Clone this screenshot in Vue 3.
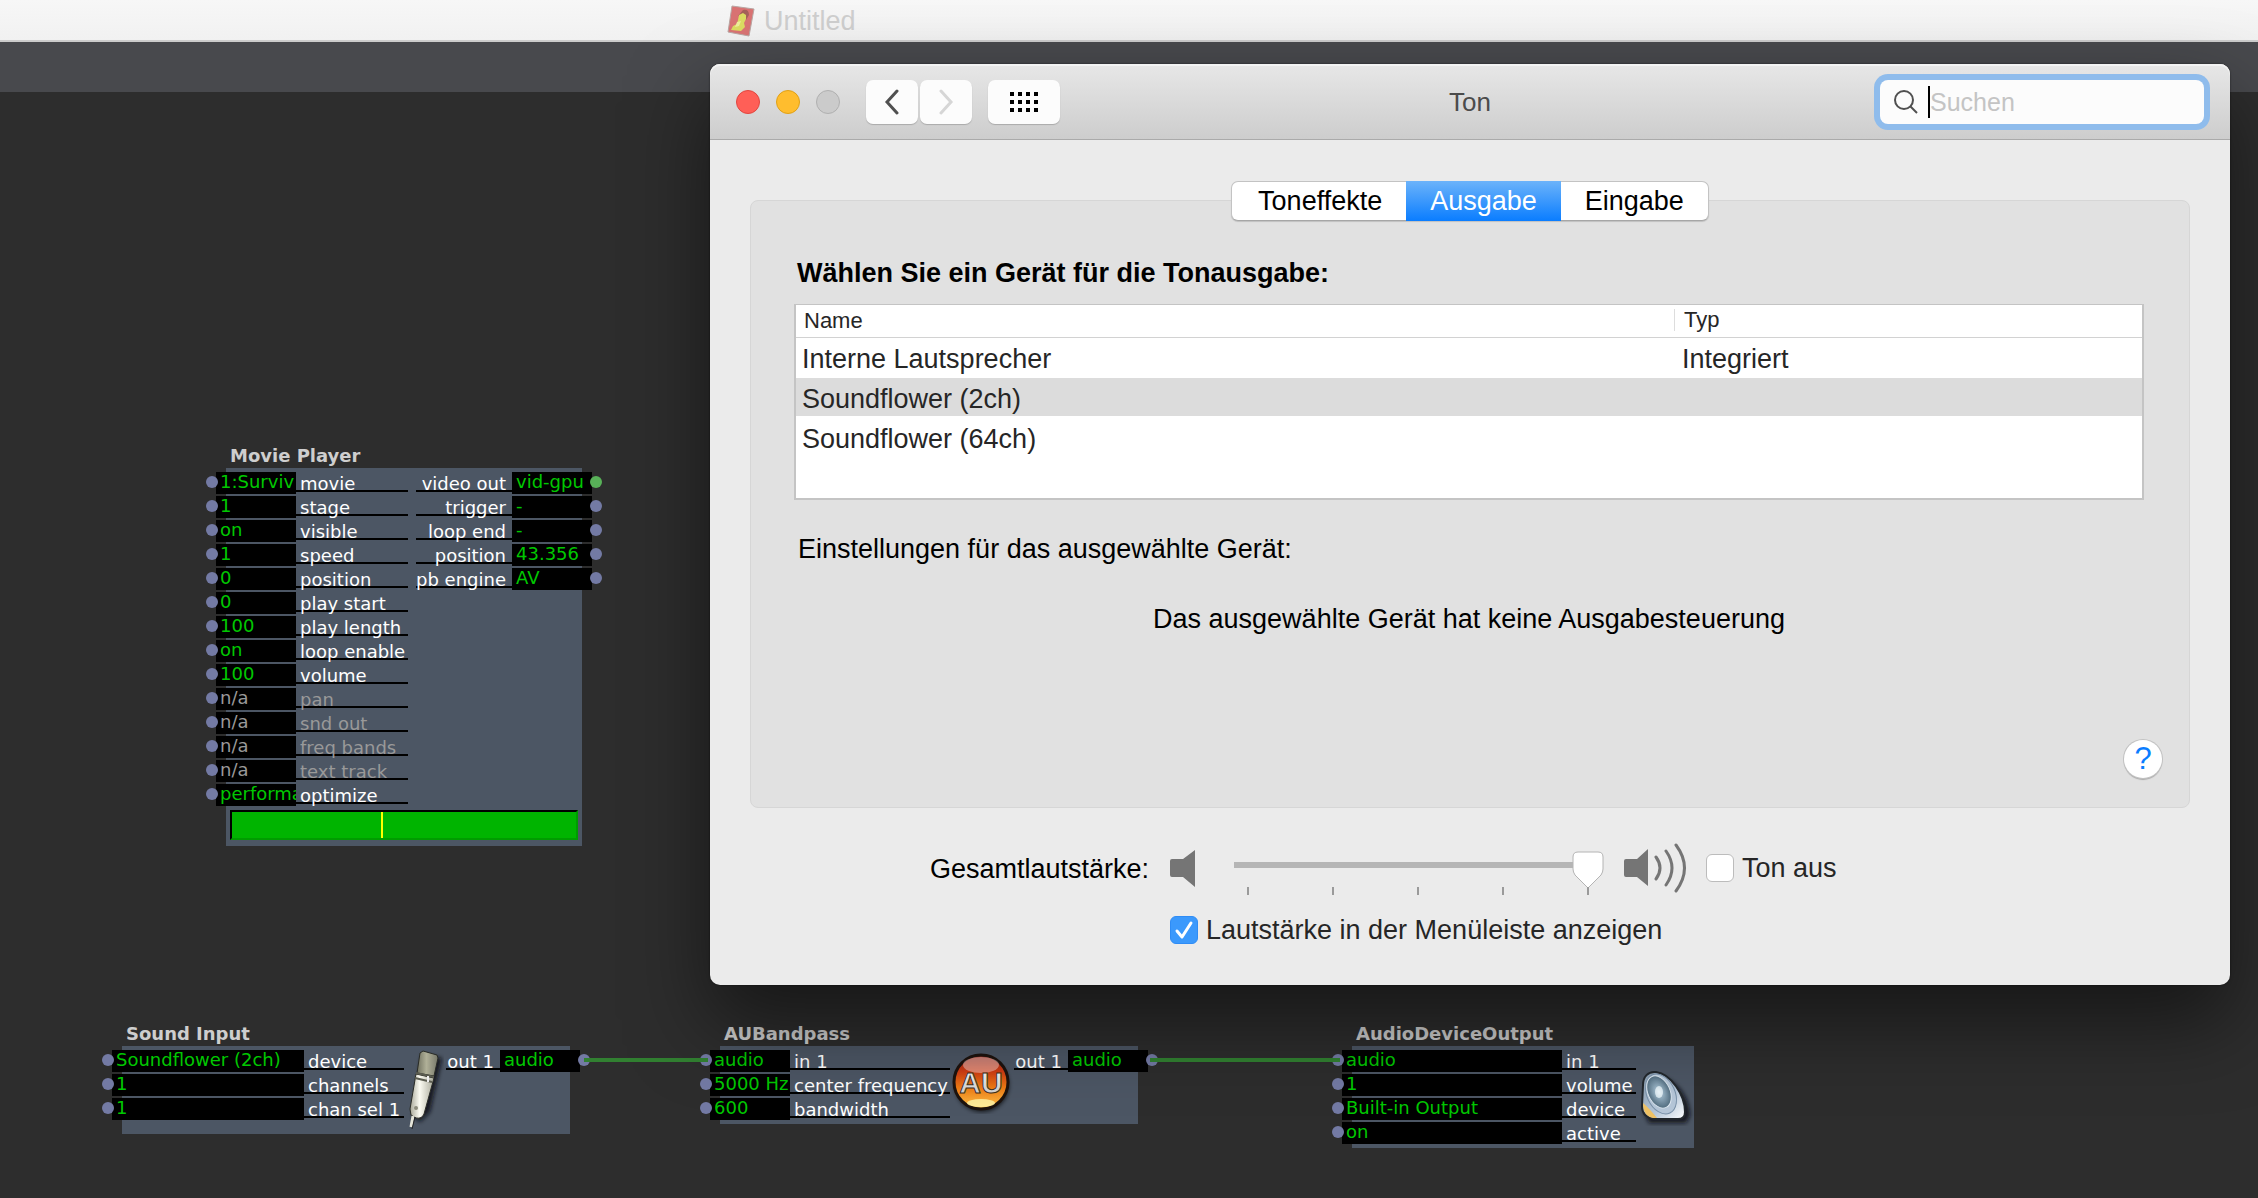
<script setup>
import { ref } from 'vue'

const inp = (value, label, off = false) => ({ value, label, off })

const nodes = [
  {
    id: 'movie', title: 'Movie Player', x: 226, y: 352, width: 356, valueWidth: 80, labelWidth: 112, outWidth: 96,
    inputs: [
      inp('1:Surviv', 'movie'), inp('1', 'stage'), inp('on', 'visible'), inp('1', 'speed'),
      inp('0', 'position'), inp('0', 'play start'), inp('100', 'play length'), inp('on', 'loop enable'),
      inp('100', 'volume'), inp('n/a', 'pan', true), inp('n/a', 'snd out', true),
      inp('n/a', 'freq bands', true), inp('n/a', 'text track', true), inp('performa', 'optimize')
    ],
    outputs: [
      { label: 'video out', value: 'vid-gpu', live: true }, { label: 'trigger', value: '-' },
      { label: 'loop end', value: '-' }, { label: 'position', value: '43.356' }, { label: 'pb engine', value: 'AV' }
    ],
    progress: 43.356
  },
  {
    id: 'mic', title: 'Sound Input', x: 122, y: 930, width: 448, valueWidth: 192, labelWidth: 100, outWidth: 54,
    inputs: [inp('Soundflower (2ch)', 'device'), inp('1', 'channels'), inp('1', 'chan sel 1')],
    outputs: [{ label: 'out 1', value: 'audio' }]
  },
  {
    id: 'au', title: 'AUBandpass', x: 720, y: 930, width: 418, valueWidth: 80, labelWidth: 160, outWidth: 54,
    inputs: [inp('audio', 'in 1'), inp('5000 Hz', 'center frequency'), inp('600', 'bandwidth')],
    outputs: [{ label: 'out 1', value: 'audio' }]
  },
  {
    id: 'speaker', title: 'AudioDeviceOutput', x: 1352, y: 930, width: 342, valueWidth: 220, labelWidth: 74, outWidth: 0,
    inputs: [inp('audio', 'in 1'), inp('1', 'volume'), inp('Built-in Output', 'device'), inp('on', 'active')],
    outputs: []
  }
]

const wires = [
  { x: 584, y: 966, width: 124 },
  { x: 1150, y: 966, width: 190 }
]

const tabs = ['Toneffekte', 'Ausgabe', 'Eingabe']
const activeTab = ref('Ausgabe')

const devices = [
  { name: 'Interne Lautsprecher', type: 'Integriert' },
  { name: 'Soundflower (2ch)', type: '' },
  { name: 'Soundflower (64ch)', type: '' }
]
const selected = ref('Soundflower (2ch)')
const volume = ref(100)
const muted = ref(false)
const inMenuBar = ref(true)
const query = ref('')
</script>

<template>
  <div class="desktop">
    <header class="doc-bar">
      <svg class="doc-icon" width="28" height="32" viewBox="0 0 28 32" aria-hidden="true">
        <path d="M5 1 27 4 22 31 1 27Z" fill="#d97373" stroke="#b9a7a4" stroke-width="1" />
        <path d="M16 5q6-1 6 5l-3 5-3-5-5 1Z" fill="#a5615a" />
        <path d="m12 10 4-2 3 2v4l-2 4 1 4-4 4-10-1 2-4 4-2 1-4Z" fill="#dcdc62" />
        <path d="m10 17 4-1-2 5-4 1Z" fill="#eeee9a" />
      </svg>
      <span>Untitled</span>
    </header>
    <div class="doc-band"></div>

    <main class="canvas">
      <section v-for="n in nodes" :key="n.id" class="node" :style="{ left: n.x + 'px', top: n.y + 'px', width: n.width + 'px' }">
        <h2 class="node-title">{{ n.title }}</h2>
        <div class="node-body">
          <div class="node-ports">
            <div class="ports inputs">
              <div v-for="(p, i) in n.inputs" :key="i" class="port" :class="{ off: p.off }">
                <i class="dot"></i>
                <span class="value" :style="{ width: n.valueWidth + 'px' }">{{ p.value }}</span>
                <span class="label" :style="{ width: n.labelWidth + 'px' }">{{ p.label }}</span>
              </div>
            </div>

            <svg v-if="n.id === 'mic'" class="node-icon" width="36" height="80" viewBox="0 0 36 80" aria-hidden="true">
              <defs>
                <linearGradient id="micHead" x1="0" x2="1"><stop offset="0" stop-color="#6f705f" /><stop offset=".45" stop-color="#b0b098" /><stop offset="1" stop-color="#77786a" /></linearGradient>
                <linearGradient id="micBody" x1="0" x2="1"><stop offset="0" stop-color="#a7a798" /><stop offset=".4" stop-color="#fbfbf2" /><stop offset="1" stop-color="#a9a99a" /></linearGradient>
                <filter id="micBlur" x="-50%" y="-20%" width="200%" height="140%"><feGaussianBlur stdDeviation="2" /></filter>
              </defs>
              <path d="M14 5 34 8 22 62 12 72 5 66Z" fill="#0c0f13" opacity=".85" filter="url(#micBlur)" />
              <path d="m12 3 3-2 14 4 1 3-4 18-17-3Z" fill="url(#micHead)" stroke="#292b26" stroke-width="1" />
              <path d="m8 24 18 4-10 36q-2 5-8 4l-5-3-1-6Z" fill="url(#micBody)" stroke="#2b2d28" stroke-width="1" />
              <path d="m8 23 18 4M7 28l17 4" stroke="#5b5c50" stroke-width="2" />
              <path d="M20 26v6" stroke="#eee" stroke-width="2" />
              <circle cx="8" cy="58" r="2" fill="#8b8b7b" />
              <path d="M5 66 3 77" stroke="#e5e5d9" stroke-width="3" />
              <path d="M7 67 4 79" stroke="#222" stroke-width="1" />
            </svg>

            <svg v-if="n.id === 'au'" class="node-icon au" width="62" height="62" viewBox="0 0 62 62" aria-hidden="true">
              <defs>
                <linearGradient id="auFill" x1="0" x2="0" y1="0" y2="1"><stop offset="0" stop-color="#8c2a22" /><stop offset=".3" stop-color="#cf3b12" /><stop offset=".6" stop-color="#ee7a14" /><stop offset="1" stop-color="#ffc54a" /></linearGradient>
                <linearGradient id="auText" x1="0" x2="0" y1="0" y2="1"><stop offset="0" stop-color="#fff" /><stop offset="1" stop-color="#c4c4c4" /></linearGradient>
                <filter id="auBlur" x="-20%" y="-20%" width="140%" height="140%"><feGaussianBlur stdDeviation="2" /></filter>
              </defs>
              <circle cx="30" cy="33" r="27" fill="#000" opacity=".7" filter="url(#auBlur)" />
              <circle cx="29" cy="30" r="27" fill="url(#auFill)" stroke="#1d130e" stroke-width="3" />
              <ellipse cx="29" cy="13" rx="18" ry="8" fill="#f6cfc9" opacity=".5" />
              <ellipse cx="29" cy="51" rx="14" ry="4" fill="#fff3a6" opacity=".85" />
              <text x="29" y="41" text-anchor="middle" class="au-text">AU</text>
            </svg>

            <svg v-if="n.id === 'speaker'" class="node-icon spk" width="54" height="56" viewBox="0 0 54 56" aria-hidden="true">
              <defs>
                <linearGradient id="spkRim" x1="0" x2="1" y1="0" y2="1"><stop offset="0" stop-color="#8296a8" /><stop offset=".6" stop-color="#b7c8da" /><stop offset="1" stop-color="#fff" /></linearGradient>
                <radialGradient id="spkCone"><stop offset="0" stop-color="#f4fbff" /><stop offset=".35" stop-color="#93aec0" /><stop offset="1" stop-color="#526d80" /></radialGradient>
                <filter id="spkBlur" x="-20%" y="-20%" width="140%" height="140%"><feGaussianBlur stdDeviation="2" /></filter>
              </defs>
              <path d="M9 6C30 2 50 24 50 46l-4 7H9L4 42Z" fill="#0b0e12" opacity=".85" filter="url(#spkBlur)" />
              <path d="M3 15C3 7 8 1 16 2c15 2 29 23 29 40 0 5-3 7-7 7H14Q2 47 2 36Z" fill="url(#spkRim)" stroke="#22272c" stroke-width="2" />
              <path d="M3 33q6 5 14 15h-4Q3 46 3 33Z" fill="#efc264" />
              <ellipse cx="21" cy="24" rx="14" ry="21" transform="rotate(-25 21 24)" fill="#b5c6d8" stroke="#7890a8" stroke-width="1" />
              <ellipse cx="19" cy="22" rx="11" ry="17" transform="rotate(-25 19 22)" fill="url(#spkCone)" stroke="#dce7f0" stroke-width="1" />
              <ellipse cx="19" cy="22" rx="4" ry="6" fill="#e9f4f9" opacity=".8" />
            </svg>

            <div v-if="n.outputs.length" class="ports outputs">
              <div v-for="p in n.outputs" :key="p.label" class="port">
                <span class="label out" :style="{ width: n.outWidth + 'px' }">{{ p.label }}</span>
                <span class="value out">{{ p.value }}</span>
                <i class="dot" :class="{ live: p.live }"></i>
              </div>
            </div>
          </div>
          <div v-if="n.progress" class="progress"><i :style="{ left: n.progress + '%' }"></i></div>
        </div>
      </section>
      <i v-for="w in wires" :key="w.x" class="wire" :style="{ left: w.x + 'px', top: w.y + 'px', width: w.width + 'px' }"></i>
    </main>

    <section class="window" aria-label="Ton">
      <header class="toolbar">
        <div class="tools">
          <div class="lights">
            <button class="light red" aria-label="Schließen"></button>
            <button class="light yellow" aria-label="Minimieren"></button>
            <button class="light" aria-label="Zoomen" disabled></button>
          </div>
          <div class="nav">
            <button class="tool" aria-label="Zurück">
              <svg width="16" height="26" viewBox="0 0 16 26"><path d="M13 2 3 13l10 11" fill="none" stroke="#505050" stroke-width="3" stroke-linecap="round" /></svg>
            </button>
            <button class="tool" aria-label="Vorwärts" disabled>
              <svg width="16" height="26" viewBox="0 0 16 26"><path d="m3 2 10 11L3 24" fill="none" stroke="#d6d6d6" stroke-width="3" stroke-linecap="round" /></svg>
            </button>
          </div>
          <button class="tool all" aria-label="Alle einblenden">
            <svg width="28" height="20" viewBox="0 0 28 20">
              <path d="M0 2h28M0 10h28M0 18h28" stroke="#000" stroke-width="4" stroke-dasharray="4 4" />
            </svg>
          </button>
        </div>
        <h1>Ton</h1>
        <div class="search-side">
          <label class="search">
            <svg width="24" height="24" viewBox="0 0 24 24" aria-hidden="true"><circle cx="10" cy="10" r="9" fill="none" stroke="#505050" stroke-width="2" /><path d="m16 16 7 7" stroke="#505050" stroke-width="2" /></svg>
            <i class="caret"></i>
            <input v-model="query" type="text" placeholder="Suchen" aria-label="Suchen">
          </label>
        </div>
      </header>

      <div class="content">
        <div class="tabs" role="tablist">
          <button v-for="t in tabs" :key="t" role="tab" :aria-selected="t === activeTab" :class="{ active: t === activeTab }" @click="activeTab = t">{{ t }}</button>
        </div>
        <div class="panel">
          <h2>Wählen Sie ein Gerät für die Tonausgabe:</h2>
          <div class="list">
            <table>
              <thead><tr><th class="name">Name</th><th><span>Typ</span></th></tr></thead>
              <tbody>
                <tr v-for="d in devices" :key="d.name" :class="{ selected: d.name === selected }" @click="selected = d.name">
                  <td>{{ d.name }}</td><td>{{ d.type }}</td>
                </tr>
              </tbody>
            </table>
          </div>
          <p class="settings">Einstellungen für das ausgewählte Gerät:</p>
          <p class="none">Das ausgewählte Gerät hat keine Ausgabesteuerung</p>
          <button class="help" aria-label="Hilfe">?</button>
        </div>

        <div class="volume">
          <label class="volume-label" for="vol">Gesamtlautstärke:</label>
          <div class="controls">
            <div class="slider-row">
              <svg width="26" height="38" viewBox="0 0 26 38" aria-hidden="true"><path d="M2 10h11L25 1v37L13 28H2q-2 0-2-2V12q0-2 2-2Z" fill="#757575" /></svg>
              <div class="slider">
                <input id="vol" v-model="volume" type="range" min="0" max="100">
                <div class="ticks"><i v-for="k in 5" :key="k"></i></div>
              </div>
              <svg width="64" height="50" viewBox="0 0 64 50" aria-hidden="true">
                <path d="M2 16h11L24 6v37L13 34H2q-2 0-2-2V18q0-2 2-2Z" fill="#757575" />
                <path d="M32 14q8 11 0 22M42 8q12 17 0 34M52 2q17 23 0 46" fill="none" stroke="#757575" stroke-width="3" stroke-linecap="round" />
              </svg>
              <label class="check mute"><input v-model="muted" type="checkbox">Ton aus</label>
            </div>
            <label class="check"><input v-model="inMenuBar" type="checkbox">Lautstärke in der Menüleiste anzeigen</label>
          </div>
        </div>
      </div>
    </section>
  </div>
</template>

<style>
html, body { margin: 0; background: #2d2d2d; }
</style>

<style scoped>
* { box-sizing: border-box; }
h1, h2, p { margin: 0; }
button { margin: 0; padding: 0; border: 0; font: inherit; color: inherit; }

.desktop {
  position: relative;
  display: flex;
  flex-direction: column;
  min-height: 100vh;
  overflow: hidden;
  background: #2d2d2d;
  font-family: "Liberation Sans", Arial, sans-serif;
  font-size: 27px;
  color: #000;
}
.doc-bar {
  display: flex;
  align-items: center;
  gap: 9px;
  height: 42px;
  padding: 2px 0 0 727px;
  border-bottom: 2px solid #ccc;
  background: linear-gradient(#f7f7f7, #f1f1f1);
  color: #cecece;
}
.doc-band { height: 50px; background: #48494d; }
.canvas { position: relative; flex: 1; font-family: "DejaVu Sans", Verdana, sans-serif; font-size: 18px; }

.node { position: absolute; }
.node-title { padding-left: 4px; height: 24px; line-height: 24px; font-size: 18px; color: #cecece; white-space: nowrap; }
.node-body { padding: 4px 0; background: #4c5664; }
.node-ports { display: flex; }
.ports { display: flex; flex-direction: column; gap: 2px; }
.inputs { margin-left: -20px; }
.outputs { margin-left: auto; margin-right: -20px; }
.port { display: flex; height: 22px; align-items: flex-start; color: #fff; }
.dot { position: relative; z-index: 1; flex: none; width: 12px; height: 12px; margin-top: 4px; margin-right: -2px; border-radius: 6px; background: #737aa4; }
.outputs .dot { margin: 4px 0 0 -2px; }
.dot.live { background: #58b158; }
.value {
  height: 22px;
  padding-left: 4px;
  line-height: 20px;
  overflow: hidden;
  white-space: nowrap;
  background: #000;
  color: #00c800;
}
.value.out { width: 80px; }
.label { height: 20px; padding-left: 4px; line-height: 24px; border-bottom: 2px solid #000; white-space: nowrap; }
.label.out { padding: 0 6px 0 0; display: flex; justify-content: flex-end; }
.off .value, .off .label { color: #999; }
.node-icon { margin-left: 4px; }
.au { margin: 2px 0 0 2px; }
.spk { margin: 20px 0 0 4px; }
.au-text { font: bold 30px "Liberation Sans", Arial, sans-serif; fill: url(#auText); stroke: #40301c; stroke-width: 1px; }
.progress {
  position: relative;
  height: 30px;
  margin: 4px 4px 2px;
  background: #00b400;
  border: 2px solid #009c00;
  border-top-color: #000;
  border-left-color: #000;
}
.progress i { position: absolute; top: 0; bottom: 0; width: 2px; background: #ff0; }
.wire { position: absolute; z-index: 2; height: 4px; background: #318031; }

.window {
  position: absolute;
  z-index: 3;
  top: 64px;
  left: 710px;
  right: 28px;
  padding-bottom: 36px;
  border-radius: 10px;
  background: #ebebeb;
  box-shadow: 0 0 2px rgba(0, 0, 0, .6), 0 36px 80px rgba(0, 0, 0, .5);
}
.toolbar {
  display: flex;
  align-items: center;
  height: 76px;
  padding: 0 26px;
  border-bottom: 1px solid #aaa;
  border-radius: 10px 10px 0 0;
  background: linear-gradient(#e7e7e7, #cdcdcd);
  box-shadow: inset 0 2px 0 #f3f3f3;
}
.tools, .search-side { flex: 1; display: flex; align-items: center; }
.lights { display: flex; gap: 16px; margin-right: 26px; }
.light { width: 24px; height: 24px; border: 1px solid #b0b0b0; border-radius: 12px; background: #cbcbcb; }
.light.red { background: #ff5f57; border-color: #e2463f; }
.light.yellow { background: #ffbd2e; border-color: #e1a116; }
.nav { display: flex; gap: 2px; margin-right: 16px; }
.tool { display: flex; align-items: center; justify-content: center; width: 52px; height: 44px; border-radius: 7px; background: #fcfcfc; box-shadow: 0 1px 1px #aaa; }
.tool.all { width: 72px; }
.toolbar h1 { padding-top: 2px; font-size: 26px; font-weight: 400; color: #4b4b4b; }
.search-side { justify-content: flex-end; }
.search { display: flex; align-items: center; width: 324px; height: 44px; padding: 0 14px; border-radius: 8px; background: #fcfcfc; box-shadow: 0 0 0 6px #8fbcec; }
.caret { width: 2px; height: 32px; margin-left: 10px; background: #000; }
.search input { flex: 1; min-width: 0; padding: 2px 0 0; border: 0; outline: 0; background: none; font: inherit; font-size: 25px; }
.search input::placeholder { color: #c4c4c4; opacity: 1; }

.content { padding: 41px 40px 0; }
.tabs {
  position: relative;
  display: flex;
  width: max-content;
  margin: 0 auto -21px;
  border: 1px solid #c3c3c3;
  border-bottom-color: #a6a6a6;
  border-radius: 7px;
  background: #fff;
  box-shadow: 0 1px 1px rgba(0, 0, 0, .15);
}
.tabs button { height: 38px; padding: 0 24px; background: none; }
.tabs button:first-child { padding: 0 24px 0 26px; }
.tabs .active { margin: -1px 0; height: 40px; color: #fff; background: linear-gradient(#6cb3fa, #0a7dff); }
.panel {
  display: flex;
  flex-direction: column;
  height: 608px;
  padding: 56px 45px 0 43px;
  border: 1px solid #d6d6d6;
  border-radius: 8px;
  background: #e1e1e1;
}
.panel h2 { padding-left: 3px; font-size: 27px; line-height: 32px; }
.list { height: 196px; margin-top: 15px; border: 2px solid #c4c4c4; border-top-width: 1px; background: #fff; color: #262626; }
table { width: 100%; border-spacing: 0; table-layout: fixed; }
th { height: 33px; padding: 0 0 0 8px; border-bottom: 1px solid #d2d2d2; text-align: left; font-size: 22px; font-weight: 400; line-height: 24px; }
th.name { width: 878px; }
th:last-child { padding-left: 0; }
th span { display: block; margin-bottom: 2px; height: 22px; line-height: 22px; padding-left: 9px; border-left: 1px solid #ddd; }
td { height: 40px; padding: 4px 0 0 6px; line-height: 34px; border-bottom: 2px solid #fff; }
td:last-child { padding-left: 8px; }
.selected td { background: #dcdcdc; }
.settings { margin-top: 32px; padding-left: 4px; line-height: 34px; }
.none { margin-top: 36px; line-height: 34px; text-align: center; }
.help { width: 38px; height: 38px; margin: auto -18px 29px auto; border-radius: 19px; background: #fff; box-shadow: 0 0 0 1px #c2c2c2, 0 2px 1px #aaa; color: #0a7dff; font-size: 31px; line-height: 38px; }

.volume { display: flex; padding: 34px 0 0 180px; }
.volume-label { width: 240px; height: 52px; line-height: 54px; white-space: nowrap; }
.slider-row { display: flex; align-items: center; height: 52px; }
.slider { position: relative; width: 370px; height: 34px; margin: 0 20px 0 38px; }
.slider input { display: block; width: 100%; height: 38px; margin: 0; appearance: none; background: linear-gradient(#b5b5b5, #b5b5b5) 0 11px / 354px 6px no-repeat; outline: 0; }
.slider input::-webkit-slider-thumb {
  appearance: none;
  width: 32px;
  height: 38px;
  background: url("data:image/svg+xml,%3Csvg xmlns='http://www.w3.org/2000/svg' width='32' height='38'%3E%3Cpath d='M6 1h20q5 0 5 5v12q0 3-2 6L16 37 3 24q-2-3-2-6V6q0-5 5-5Z' fill='white' stroke='%23b4b4b4'/%3E%3C/svg%3E");
}
.ticks { position: absolute; left: 13px; right: 15px; top: 36px; display: flex; justify-content: space-between; }
.ticks i { width: 2px; height: 8px; background: #9a9a9a; }
.check { display: flex; align-items: center; gap: 8px; color: #262626; line-height: 38px; white-space: nowrap; }
.mute { margin-left: 18px; }
.controls > .check { margin-top: 17px; height: 38px; }
.check input { appearance: none; width: 28px; height: 28px; margin: 0; border: 1px solid #bcbcbc; border-radius: 6px; background: #fff; }
.check input:checked {
  border-color: #2f8cf5;
  background: #3b99fc url("data:image/svg+xml,%3Csvg xmlns='http://www.w3.org/2000/svg' width='26' height='26'%3E%3Cpath d='M6 14l5 6 9-14' fill='none' stroke='white' stroke-width='3' stroke-linecap='round' stroke-linejoin='round'/%3E%3C/svg%3E") center no-repeat;
}
</style>
